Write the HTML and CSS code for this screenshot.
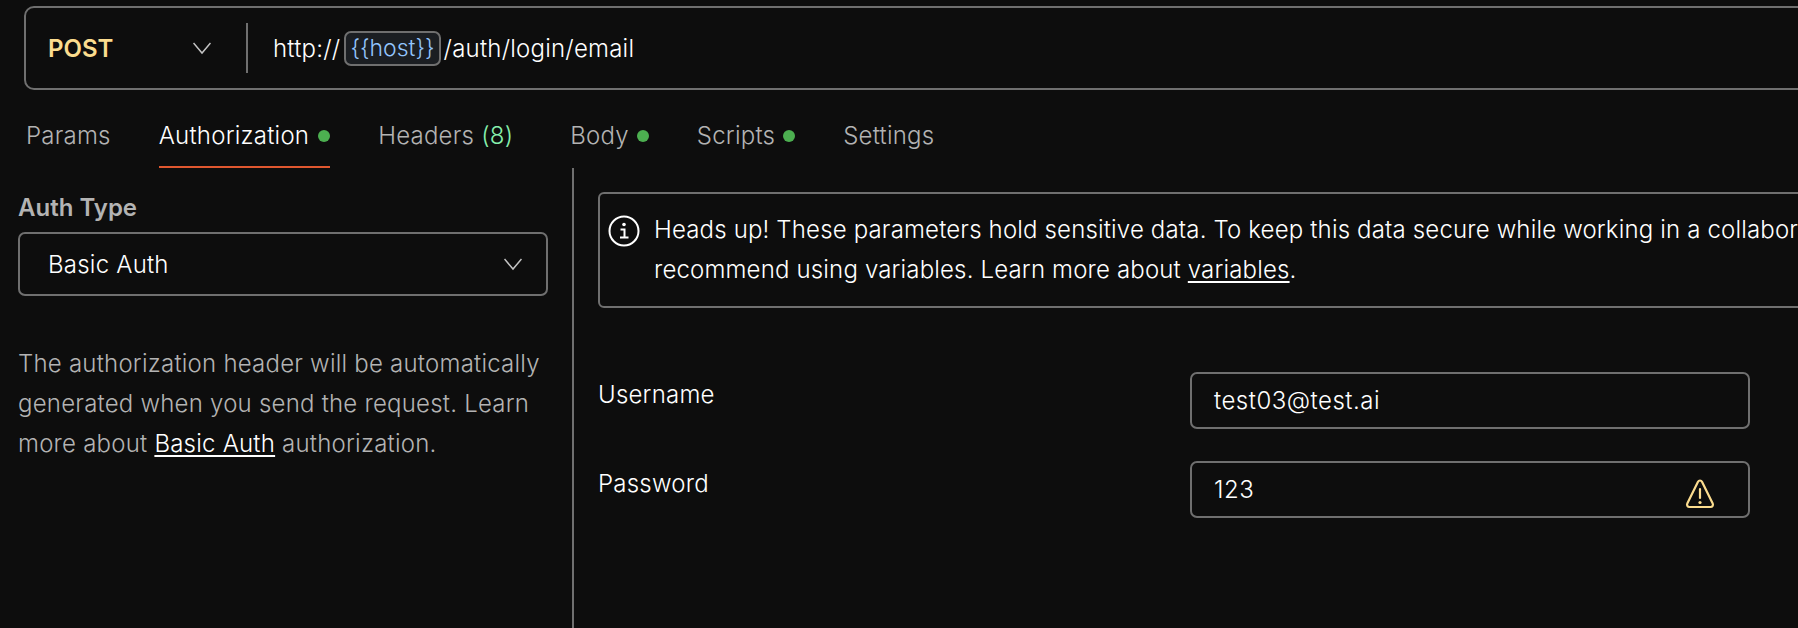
FILE: index.html
```html
<!DOCTYPE html>
<html lang="en">
<head>
  <meta charset="UTF-8">
  <title>Request</title>
  <link rel="stylesheet" href="styles.css">
</head>
<body>
  <div class="url-bar">
    <div class="method">
      <span class="method-name">POST</span>
      <svg class="chevron" viewBox="0 0 18 18"><path d="M.5 4l8.500 10 8.500-10"/></svg>
    </div>
    <div class="url">http://<span class="var">{{host}}</span>/auth/login/email</div>
  </div>

  <div class="tabs">
    <div class="tab tab-params">Params</div>
    <div class="tab active">Authorization<span class="dot"></span></div>
    <div class="tab tab-headers">Headers <span class="count">(8)</span></div>
    <div class="tab tab-body">Body<span class="dot"></span></div>
    <div class="tab tab-scripts">Scripts<span class="dot"></span></div>
    <div class="tab">Settings</div>
  </div>

  <div class="auth">
    <div class="auth-left">
      <div class="auth-label">Auth Type</div>
      <div class="select">
        <span>Basic Auth</span>
        <svg class="chevron" viewBox="0 0 18 18"><path d="M.5 4l8.500 10 8.500-10"/></svg>
      </div>
      <p class="help">The authorization header will be automatically<br>generated when you send the request. Learn<br>more about <a href="#">Basic Auth</a> authorization.</p>
    </div>
    <div class="auth-right">
      <div class="notice">
        <svg class="info" viewBox="0 0 32 32">
          <circle cx="16" cy="16" r="14.500"/>
          <path d="M12.500 14.500h4v8M12 22.500h8.500"/>
          <circle class="info-dot" cx="16" cy="9.500" r="1.800"/>
        </svg>
        <div class="notice-text">Heads up! These parameters hold sensitive data. To keep this data secure while working in a collaborative environment, we<br>recommend using variables. Learn more about <a href="#">variables</a>.</div>
      </div>
      <div class="field field-first">
        <label>Username</label>
        <div class="input">test03@test.ai</div>
      </div>
      <div class="field">
        <label>Password</label>
        <div class="input">
          <span>123</span>
          <svg class="warn" viewBox="0 0 30 30">
            <path d="M15 1.500c-.9 0-1.600.5-2 1.300L2.300 24.600c-.8 1.600.3 3.400 2.100 3.400h21.200c1.800 0 2.900-1.800 2.100-3.400L17 2.800c-.4-.8-1.100-1.300-2-1.300z"/>
            <path d="M15 10v9"/>
            <circle class="warn-dot" cx="15" cy="23.500" r="1.600"/>
          </svg>
        </div>
      </div>
    </div>
  </div>
</body>
</html>
```

FILE: styles.css
```css
html, body {
  height: 100%;
}
body {
  margin: 0;
  background: #0d0d0d;
  color: #fff;
  font-family: 'Inter', 'Noto Sans', sans-serif;
  font-size: 24px;
  font-weight: 350;
  letter-spacing: 0.22px;
  overflow: hidden;
}
a {
  color: #fff;
  text-decoration: underline;
  text-decoration-thickness: 2px;
  text-underline-offset: 3px;
}
.chevron {
  width: 18px;
  height: 18px;
  fill: none;
  stroke: #c4c4c4;
  stroke-width: 1.500;
}

/* url bar */
.url-bar {
  display: flex;
  align-items: center;
  box-sizing: border-box;
  width: 2000px;
  height: 84px;
  margin: 6px 0 0 24px;
  border: 2px solid #6f6f6f;
  border-radius: 10px;
}
.method {
  display: flex;
  align-items: center;
  justify-content: space-between;
  box-sizing: border-box;
  width: 222px;
  height: 50px;
  padding: 0 35px 0 22px;
  border-right: 2px solid #6f6f6f;
}
.method-name {
  color: #fbdc8e;
  font-weight: 600;
  letter-spacing: 0;
}
.url {
  display: flex;
  align-items: center;
  margin-left: 25px;
  white-space: nowrap;
}
.var {
  margin: 0 3px 0 4px;
  padding: 1px 4px 2px;
  border: 2px solid #6f6f6f;
  border-radius: 7px;
  background: #1b1e22;
  color: #93c5fd;
  font-size: 23px;
  letter-spacing: 0;
}

/* tabs */
.tabs {
  display: flex;
  height: 65px;
  margin: 13px 0 0 26px;
  color: #b3b3b3;
}
.tab {
  display: flex;
  align-items: center;
  box-sizing: border-box;
  height: 65px;
  white-space: pre;
}
.tab-params {
  margin-right: 48px;
}
.tab.active {
  margin-right: 48px;
  padding-top: 2px;
  border-bottom: 2px solid #e0572f;
  color: #fff;
}
.tab.active .dot {
  margin-left: 9px;
}
.tab-headers {
  margin-right: 57px;
}
.tab-body,
.tab-scripts {
  margin-right: 48px;
}
.count {
  color: #86efac;
}
.dot {
  width: 12px;
  height: 12px;
  margin-left: 8px;
  border-radius: 50%;
  background: #4caf50;
}

/* auth section */
.auth {
  display: flex;
  height: 460px;
}
.auth-left {
  flex: none;
  box-sizing: border-box;
  width: 574px;
  padding: 25px 0 0 18px;
  border-right: 2px solid #6f6f6f;
}
.auth-label {
  color: #b3b3b3;
  font-weight: 600;
  letter-spacing: 0;
  line-height: 30px;
}
.select {
  display: flex;
  align-items: center;
  justify-content: space-between;
  box-sizing: border-box;
  width: 530px;
  height: 64px;
  margin-top: 9px;
  padding: 0 24px 0 28px;
  border: 2px solid #6f6f6f;
  border-radius: 7px;
}
.help {
  margin: 48px 0 0;
  color: #b3b3b3;
  line-height: 40px;
  white-space: nowrap;
}
.auth-right {
  flex: 1;
  min-width: 0;
  padding: 24px 0 0 24px;
}
.notice {
  display: flex;
  box-sizing: border-box;
  width: 2000px;
  height: 116px;
  padding: 16px 8px;
  border: 2px solid #6f6f6f;
  border-radius: 6px;
}
.info {
  flex: none;
  width: 32px;
  height: 32px;
  margin-top: 5px;
  fill: none;
  stroke: #fff;
  stroke-width: 2;
}
.info-dot,
.warn-dot {
  stroke: none;
}
.info-dot {
  fill: #fff;
}
.notice-text {
  margin-left: 14px;
  letter-spacing: 0.16px;
  line-height: 40px;
  white-space: nowrap;
}
.field {
  display: flex;
  align-items: flex-start;
  margin-top: 32px;
}
.field-first {
  margin-top: 64px;
}
.field label {
  flex: none;
  width: 592px;
  padding-top: 8px;
  line-height: 30px;
}
.input {
  display: flex;
  align-items: center;
  justify-content: space-between;
  flex: none;
  box-sizing: border-box;
  width: 560px;
  height: 57px;
  padding: 0 33px 0 22px;
  border: 2px solid #6f6f6f;
  border-radius: 7px;
  letter-spacing: 0.5px;
}
.warn {
  width: 30px;
  height: 30px;
  margin-top: 8px;
  fill: none;
  stroke: #fbdc8e;
  stroke-width: 2.200;
  stroke-linecap: round;
}
.warn-dot {
  fill: #fbdc8e;
}
```
